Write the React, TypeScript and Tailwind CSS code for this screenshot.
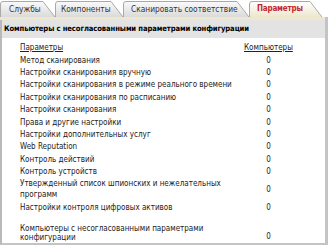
const rows: { name: string; count: number }[] = [
  { name: 'Метод сканирования', count: 0 },
  { name: 'Настройки сканирования вручную', count: 0 },
  { name: 'Настройки сканирования в режиме реального времени', count: 0 },
  { name: 'Настройки сканирования по расписанию', count: 0 },
  { name: 'Настройки сканирования', count: 0 },
  { name: 'Права и другие настройки', count: 0 },
  { name: 'Настройки дополнительных услуг', count: 0 },
  { name: 'Web Reputation', count: 0 },
  { name: 'Контроль действий', count: 0 },
  { name: 'Контроль устройств', count: 0 },
  { name: 'Утвержденный список шпионских и нежелательных программ', count: 0 },
  { name: 'Настройки контроля цифровых активов', count: 0 },
];

function Tab({ label, width, pad, active }: { label: string; width: number; pad: number; active?: boolean }) {
  const w = width;
  return (
    <div className="relative h-[17px] shrink-0" style={{ width: w }}>
      <svg className="absolute inset-0" width={w} height={17} viewBox={`0 0 ${w} 17`}>
        <defs>
          <linearGradient id={active ? 'ga' : 'gi'} x1="0" y1="0" x2="0" y2="1">
            <stop offset="0" stopColor={active ? '#ffffff' : '#fafafa'} />
            <stop offset="1" stopColor={active ? '#ede7cd' : '#dadada'} />
          </linearGradient>
        </defs>
        <path
          d={`M0.5 17 L0.5 4 Q0.5 1.5 3 1.5 L${w - 13} 1.5 L${w - 1} 17`}
          fill={`url(#${active ? 'ga' : 'gi'})`}
          stroke="#a9a9a9"
          strokeWidth="1"
        />
      </svg>
      <span
        className={`relative block pt-[3px] leading-[12px] whitespace-nowrap ${
          active ? 'text-[8px] font-bold text-[#c1272d] tracking-[-0.2px]' : 'text-[8.3px] text-[#333]'
        }`}
        style={{ paddingLeft: pad }}
      >
        {label}
      </span>
    </div>
  );
}

export default function App() {
  return (
    <div className="w-[328px] h-[247px] bg-white overflow-hidden font-['DejaVu_Sans_Condensed','DejaVu_Sans',sans-serif] text-[#222]">
      <div className="flex h-[17px] -space-x-[1px]">
        <Tab label="Службы" width={56} pad={9} />
        <Tab label="Компоненты" width={69} pad={6} />
        <Tab label="Сканировать соответствие" width={127} pad={8} />
        <Tab label="Параметры" width={74} pad={8} active />
      </div>
      <div className="h-[3px] bg-[#ede7cd] border-r-[3px] border-[#c4c4c4]" />
      <div className="border-l-2 border-r-[3px] border-b-2 border-[#c4c4c4] border-l-[#b9b9b9] h-[225px]">
        <div className="h-[18px] bg-[#e3e3e3] flex items-center pl-[2px] text-[7.6px] font-bold text-black whitespace-nowrap tracking-[-0.1px]">
          Компьютеры с несогласованными параметрами конфигурации
        </div>
        <table className="mt-[3px] ml-[18px] text-[8px] leading-[11px] border-collapse table-fixed">
          <thead>
            <tr>
              <th className="text-left font-normal py-[1px] w-[224px]">
                <span className="underline">Параметры</span>
              </th>
              <th className="text-center font-normal py-[1px] w-[47px]">
                <span className="underline">Компьютеры</span>
              </th>
            </tr>
          </thead>
          <tbody>
            {rows.map((r) => (
              <tr key={r.name}>
                <td className="py-[0.7px] pr-2 align-middle">{r.name}</td>
                <td className="py-[0.7px] text-center align-middle">{r.count}</td>
              </tr>
            ))}
            <tr>
              <td className="pt-[10px] pr-2 leading-[9px]">Компьютеры с несогласованными параметрами конфигурации</td>
              <td className="pt-[10px] text-center align-bottom">0</td>
            </tr>
          </tbody>
        </table>
      </div>
    </div>
  );
}
